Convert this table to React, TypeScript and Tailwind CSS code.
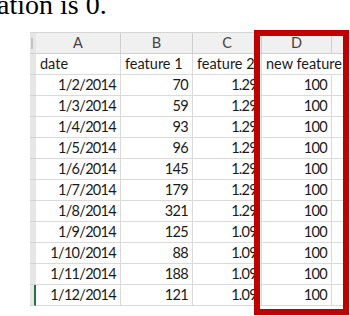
import React from "react";

const rows = [
  ["1/2/2014", "70", "1.29"],
  ["1/3/2014", "59", "1.29"],
  ["1/4/2014", "93", "1.29"],
  ["1/5/2014", "96", "1.29"],
  ["1/6/2014", "145", "1.29"],
  ["1/7/2014", "179", "1.29"],
  ["1/8/2014", "321", "1.29"],
  ["1/9/2014", "125", "1.09"],
  ["1/10/2014", "88", "1.09"],
  ["1/11/2014", "188", "1.09"],
  ["1/12/2014", "121", "1.09"],
];

const cell = "h-[21px] border-r border-b border-[#dadada] flex items-center px-[4px] whitespace-nowrap overflow-visible";
const num = `${cell} justify-end tracking-[-0.7px]`;
const head = "h-[21px] border-r border-b border-[#cfcfcf] bg-[#f0f0f0] flex items-center justify-center text-[#444]";

export default function App() {
  return (
    <div className="relative w-[350px] h-[316px] overflow-hidden bg-white">
      <div className="-mt-[9px] -ml-[3px] h-[28px] text-[28px] leading-[28px] text-black whitespace-nowrap font-['Liberation_Serif',serif]">
        ation is 0.
      </div>

      <div className="mt-[13px] ml-[30px] grid grid-cols-[6px_85px_72px_69px_70px_30px] text-[14.5px] text-[#1a1a1a] font-['Lato',sans-serif] border-t border-[#d6d6d6]">
        {/* column headers */}
        <div className="h-[21px] bg-[#e6e6e6] border-b border-[#cfcfcf] flex items-center pl-[1px]">
          <div className="w-[2px] h-[11px] bg-[#c4c4c4]" />
        </div>
        <div className={head}>A</div>
        <div className={head}>B</div>
        <div className={head}>C</div>
        <div className={head}>D</div>
        <div className={head} />

        {/* names row */}
        <div className="h-[21px] bg-[#e6e6e6] border-b border-[#d2d2d2]" />
        <div className={cell}>date</div>
        <div className={cell}>feature 1</div>
        <div className={`${cell} overflow-hidden`}>feature 2</div>
        <div className={`${cell} relative z-10 border-r-transparent`}>new feature</div>
        <div className={cell} />

        {rows.map(([date, f1, f2], i) => (
          <React.Fragment key={date}>
            <div
              className={
                i === rows.length - 1
                  ? "h-[21px] bg-[#e6e6e6] border-b border-r-2 border-[#d2d2d2] border-r-[#217346]"
                  : "h-[21px] bg-[#e6e6e6] border-b border-[#d2d2d2]"
              }
            />
            <div className={num}>{date}</div>
            <div className={num}>{f1}</div>
            <div className={num}>{f2}</div>
            <div className={num}>100</div>
            <div className={cell} />
          </React.Fragment>
        ))}
      </div>

      {/* highlight */}
      <div className="absolute left-[254px] top-[30px] w-[95px] h-[285px] border-[6px] border-[#c00000] z-20" />
    </div>
  );
}
